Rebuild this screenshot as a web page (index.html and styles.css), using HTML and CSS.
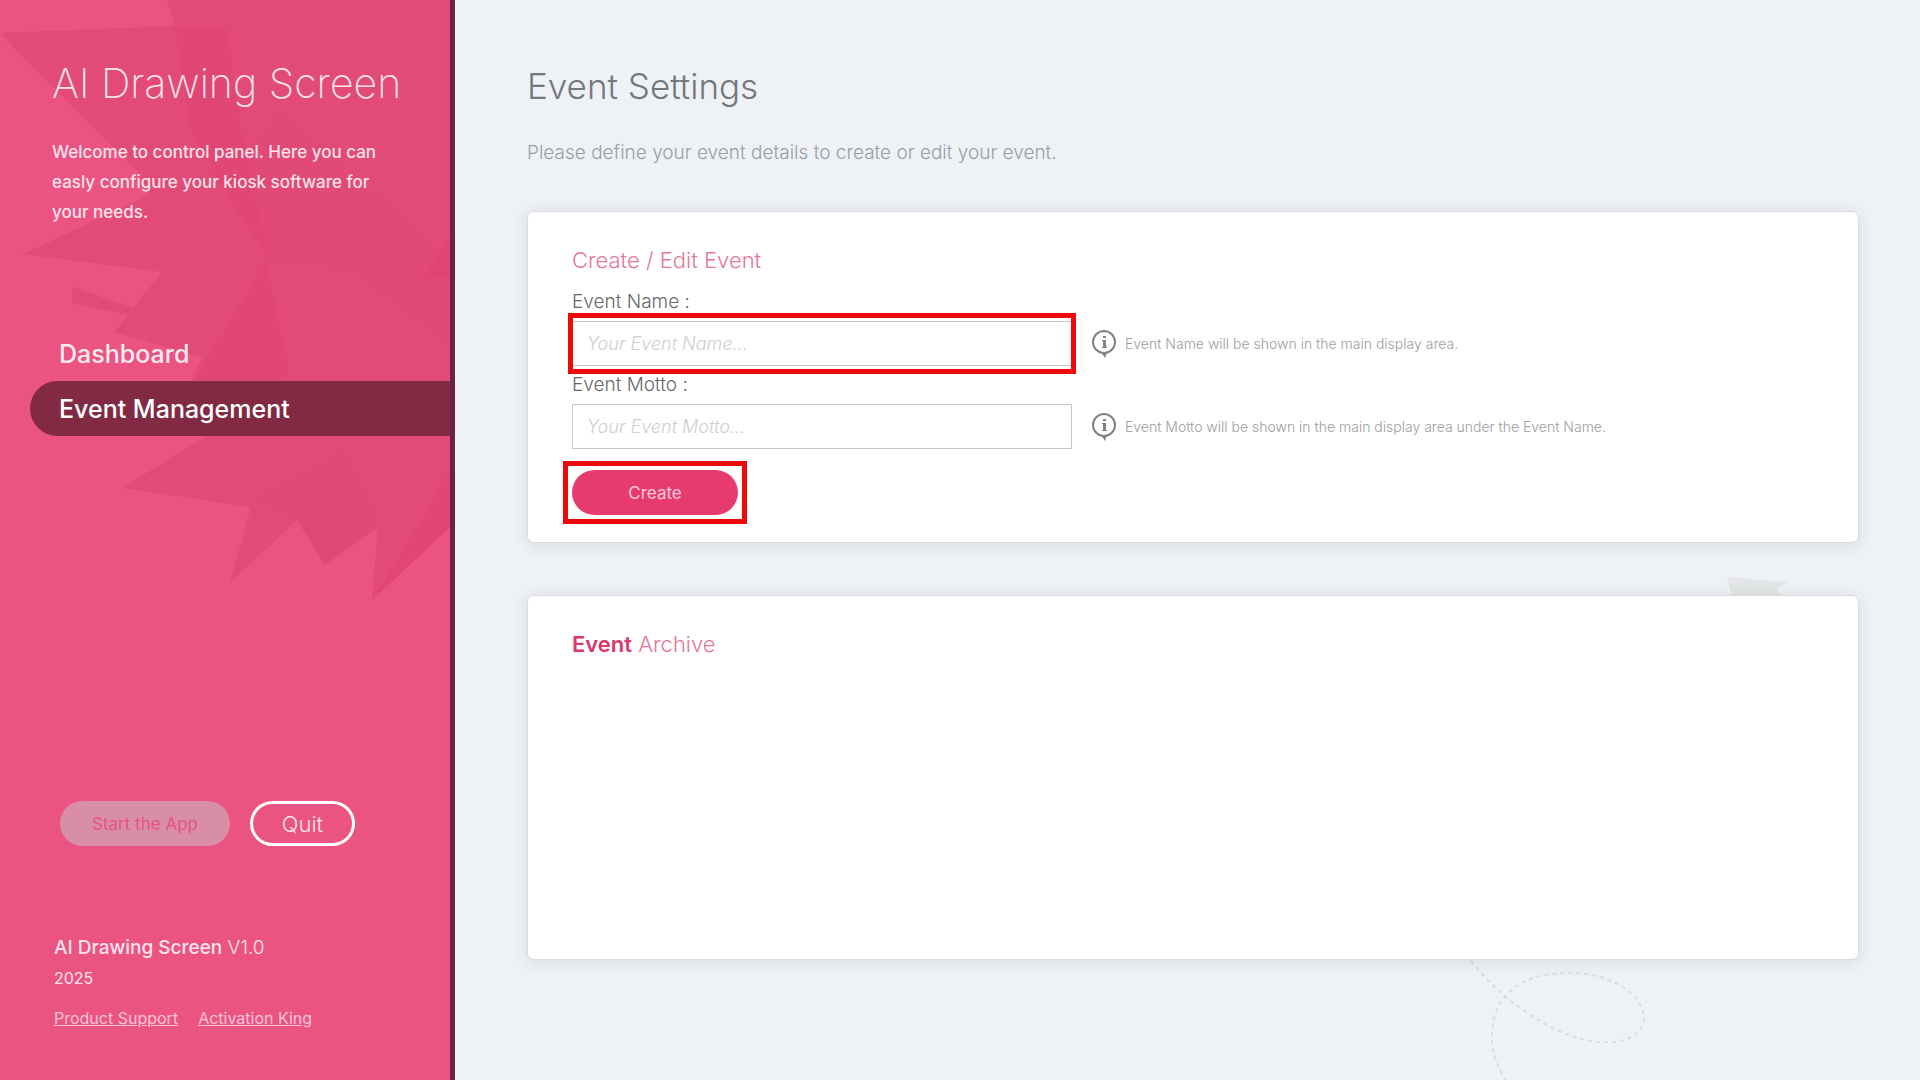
FILE: index.html
```
<!DOCTYPE html>
<html lang="en">
<head>
    <meta charset="UTF-8">
    <meta name="viewport" content="width=device-width, initial-scale=1.0">
    <title>AI Drawing Screen - Event Settings</title>
    <link rel="stylesheet" href="styles.css">
</head>
<body>

<aside class="sidebar">
    <!-- Maple leaf behind the menu -->
    <svg class="leaf" viewBox="0 0 450 610" aria-hidden="true">
        <path fill="#e24b78" d="M0 33 L175 26 L167 0 H450 V527 L372 600 L378 527 L325 565 L297 520 L230 583 L251 507 L122 488 L205 437 L178 410 L202 358 L115 332 L128 315 L72 303 V287 L133 308 L162 272 L23 254 L150 195 L138 172 Z"/>
        <path fill="#df4573" d="M175 26 L228 29 L240 125 L270 262 L240 215 L190 130 Z" opacity=".6"/>
        <path fill="#df4573" d="M266 262 L290 373 L205 437 L178 410 L215 345 Z" opacity=".6"/>
        <path fill="#df4573" d="M280 110 L430 240 L450 290 V345 L350 270 L270 262 L247 150 Z" opacity=".25"/>
        <path fill="#df4573" d="M345 450 L380 522 L325 565 L297 520 L257 500 Z" opacity=".4"/>
        <path fill="#df4573" d="M450 470 V527 L372 600 L415 530 Z" opacity=".6"/>
        <path fill="#df4573" d="M450 235 V278 H423 Z" opacity=".7"/>
    </svg>

    <header class="intro">
        <h1>AI Drawing Screen</h1>
        <p>Welcome to control panel. Here you can easly configure your kiosk software for your needs.</p>
    </header>

    <nav class="menu">
        <a href="#">Dashboard</a>
        <a href="#" class="active">Event Management</a>
    </nav>

    <div class="app-buttons">
        <button type="button" class="start-button" disabled>Start the App</button>
        <button type="button" class="quit-button">Quit</button>
    </div>

    <footer class="about">
        <div class="version"><b>AI Drawing Screen</b> V1.0</div>
        <div class="year">2025</div>
        <div class="links">
            <a href="#">Product Support</a>
            <a href="#">Activation King</a>
        </div>
    </footer>
</aside>

<main class="content">
    <svg class="fragment" viewBox="0 0 60 20" aria-hidden="true">
        <path fill="#e3e5e6" d="M0 0 L60 5 L50 12 L55 20 H5 Z"/>
    </svg>
    <svg class="trail" viewBox="0 0 200 120" aria-hidden="true">
        <path fill="none" stroke="#d9dcdf" stroke-width="2" stroke-dasharray="4 4" d="M11 1 C24 17 33 26 46 37 C78 63 110 80 140 82 C164 84 182 76 184 59 C184 40 164 26 153 22 C128 10 98 11 73 18 C48 26 33 46 32 73 C31 90 37 108 46 120"/>
    </svg>

    <h2 class="page-title">Event Settings</h2>
    <p class="page-text">Please define your event details to create or edit your event.</p>

    <!-- Create / edit form -->
    <form class="card">
        <h3>Create / Edit Event</h3>

        <label for="eventName">Event Name :</label>
        <div class="field-row">
            <div class="field marked">
                <input type="text" id="eventName" placeholder="Your Event Name...">
            </div>
            <svg class="info-icon" viewBox="0 0 24 28" aria-hidden="true">
                <circle cx="12" cy="12" r="11"/>
                <path class="solid" d="M9 22 L13 28 L15 22 Z"/>
                <path class="solid" d="M11 6 h3 v2 h-3 Z M10 10 h4 v7 h1 v1 h-5 v-1 h1 v-6 h-1 Z"/>
            </svg>
            <span class="hint">Event Name will be shown in the main display area.</span>
        </div>

        <label for="eventMotto">Event Motto :</label>
        <div class="field-row">
            <div class="field">
                <input type="text" id="eventMotto" placeholder="Your Event Motto...">
            </div>
            <svg class="info-icon" viewBox="0 0 24 28" aria-hidden="true">
                <circle cx="12" cy="12" r="11"/>
                <path class="solid" d="M9 22 L13 28 L15 22 Z"/>
                <path class="solid" d="M11 6 h3 v2 h-3 Z M10 10 h4 v7 h1 v1 h-5 v-1 h1 v-6 h-1 Z"/>
            </svg>
            <span class="hint">Event Motto will be shown in the main display area under the Event Name.</span>
        </div>

        <div class="submit marked">
            <button type="submit" class="create-button">Create</button>
        </div>
    </form>

    <!-- Past events -->
    <section class="card archive">
        <h3><b>Event</b> Archive</h3>
    </section>
</main>

</body>
</html>
```
FILE: styles.css
```
* {
    box-sizing: border-box;
}
body {
    margin: 0;
    display: flex;
    min-height: 100vh;
    font-family: Inter, "Open Sans", sans-serif;
    font-weight: 300;
    background-color: #eef1f6;
}
h1, h2, h3, p {
    margin: 0;
    font-weight: 300;
}
button, input {
    font-family: inherit;
}

/* Sidebar */
.sidebar {
    position: relative;
    flex: none;
    display: flex;
    flex-direction: column;
    width: 455px;
    padding-bottom: 47px;
    background-color: #ea5382;
    border-right: 5px solid #6b2440;
    color: #ffe3ec;
}
.leaf {
    position: absolute;
    top: 0;
    left: 0;
    width: 450px;
}
.intro, .menu, .app-buttons, .about {
    position: relative;
}
.intro {
    padding: 58px 52px 0;
}
.intro h1 {
    font-size: 41px;
    line-height: 50px;
    font-weight: 200;
    white-space: nowrap;
}
.intro p {
    margin-top: 29px;
    font-size: 17px;
    line-height: 30px;
    font-weight: 500;
}
.menu {
    margin-top: 99px;
    padding-left: 30px;
}
.menu a {
    display: block;
    padding: 2px 0 0 29px;
    border-radius: 28px 0 0 28px;
    font-size: 25px;
    line-height: 53px;
    font-weight: 500;
    color: #ffeaf1;
    text-decoration: none;
}
.menu a.active {
    background-color: #822a44;
    color: #fff;
}
.app-buttons {
    display: flex;
    gap: 20px;
    margin-top: auto;
    padding-left: 60px;
}
.app-buttons button {
    height: 45px;
    border-radius: 23px;
}
.start-button {
    width: 170px;
    border: none;
    background-color: #d98ea8;
    color: #e4547f;
    font-size: 17px;
    font-weight: 400;
}
.quit-button {
    width: 105px;
    border: 3px solid #fff;
    background: none;
    color: #ffe3ec;
    font-size: 22px;
    font-weight: 300;
}
.about {
    margin-top: 87px;
    padding-left: 54px;
}
.version {
    font-size: 19px;
    line-height: 30px;
}
.version b {
    font-weight: 500;
}
.year {
    font-size: 16px;
    line-height: 30px;
    font-weight: 400;
}
.links {
    display: flex;
    gap: 20px;
    margin-top: 10px;
    font-size: 16px;
    line-height: 30px;
    font-weight: 400;
}
.links a {
    color: #ffc4d6;
}

/* Main area */
.content {
    position: relative;
    flex: 1;
    padding: 64px 61px 64px 72px;
}
.fragment {
    position: absolute;
    top: 577px;
    right: 133px;
    width: 60px;
}
.trail {
    position: absolute;
    right: 260px;
    bottom: 0;
    width: 200px;
}
.page-title {
    font-size: 35px;
    line-height: 44px;
    color: #74787c;
}
.page-text {
    margin-top: 30px;
    font-size: 19px;
    line-height: 30px;
    color: #9a9ea3;
}
.card {
    position: relative;
    min-height: 332px;
    margin-top: 43px;
    padding: 33px 44px 20px;
    background-color: #fff;
    border: 1px solid #d9dcde;
    border-radius: 7px;
    box-shadow: 0 2px 16px rgba(60, 70, 60, 0.12);
}
.card h3 {
    margin-bottom: 14px;
    font-size: 22px;
    line-height: 30px;
    color: #e5769a;
}
.card h3 b {
    font-weight: 600;
    color: #d9386c;
}
.card label {
    display: block;
    margin-top: 6px;
    font-size: 19px;
    line-height: 26px;
    color: #66696c;
}
.archive {
    min-height: 365px;
    margin-top: 52px;
}
.field-row {
    display: flex;
    align-items: center;
    margin-top: 6px;
}
.field {
    width: 500px;
    margin-right: 20px;
}
.field input {
    display: block;
    width: 100%;
    height: 45px;
    padding: 0 14px;
    border: 1px solid #c4c6c8;
    font-size: 18px;
    font-weight: 300;
    color: #55585b;
}
.field input::placeholder {
    color: #cdcfd1;
    font-style: italic;
}
.info-icon {
    flex: none;
    width: 24px;
    height: 28px;
    fill: none;
    stroke: #808284;
    stroke-width: 2;
}
.info-icon .solid {
    fill: #808284;
    stroke: none;
}
.hint {
    margin-left: 9px;
    font-size: 14px;
    line-height: 20px;
    color: #9b9da0;
}
.submit {
    width: 166px;
    margin-top: 21px;
}
.create-button {
    display: block;
    width: 100%;
    height: 45px;
    border: none;
    border-radius: 23px;
    background-color: #e73b70;
    color: #ffc9da;
    font-size: 17px;
    font-weight: 400;
}

/* Red frame round the steps to follow */
.marked {
    position: relative;
}
.marked::after {
    content: "";
    position: absolute;
    inset: -8px -4px;
    border: 5px solid #ee0a0a;
    pointer-events: none;
}
.submit.marked::after {
    inset: -9px;
}
```
